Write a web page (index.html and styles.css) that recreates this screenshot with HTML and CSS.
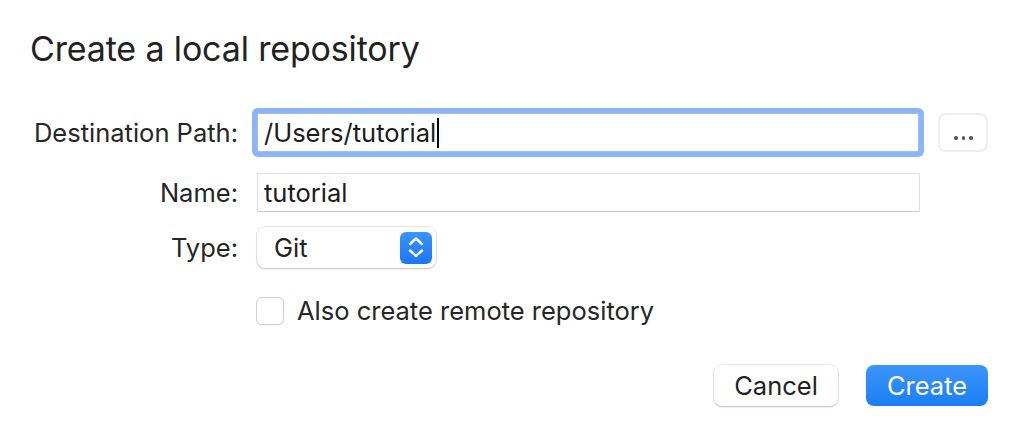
FILE: index.html
```html
<!DOCTYPE html>
<html>
<head>
<meta charset="utf-8">
<link rel="stylesheet" href="styles.css">
</head>
<body>
<div class="dialog">
  <h1 class="title">Create a local repository</h1>
  <div class="form">
    <div class="row row-path">
      <label class="label">Destination Path:</label>
      <div class="field focused"><span class="value">/Users/tutorial</span><span class="caret"></span></div>
      <button class="browse"><span class="dot"></span><span class="dot"></span><span class="dot"></span></button>
    </div>
    <div class="row row-name">
      <label class="label">Name:</label>
      <div class="field plain"><span class="value">tutorial</span></div>
    </div>
    <div class="row row-type">
      <label class="label">Type:</label>
      <div class="select">
        <span class="value">Git</span>
        <span class="stepper">
          <svg width="32" height="32" viewBox="0 0 32 32"><path d="M10 12 L16 6.5 L22 12" fill="none" stroke="#fff" stroke-width="2.4" stroke-linecap="round" stroke-linejoin="round"/><path d="M10 18.5 L16 24 L22 18.5" fill="none" stroke="#fff" stroke-width="2.4" stroke-linecap="round" stroke-linejoin="round"/></svg>
        </span>
      </div>
    </div>
    <div class="row row-check">
      <span class="label"></span>
      <label class="check"><span class="box"></span><span class="check-text">Also create remote repository</span></label>
    </div>
  </div>
  <div class="actions">
    <button class="btn cancel">Cancel</button>
    <button class="btn primary">Create</button>
  </div>
</div>
</body>
</html>
```
FILE: styles.css
```css
html, body {
  margin: 0;
  padding: 0;
  background: #ffffff;
}
body {
  width: 1022px;
  height: 430px;
  overflow: hidden;
  font-family: Inter, "Noto Sans", "Liberation Sans", sans-serif;
  color: #262626;
}
.dialog {
  padding: 26px 34px 0 30px;
}
.title {
  margin: 0;
  font-weight: 400;
  font-size: 34px;
  line-height: 46px;
  color: #222;
  letter-spacing: -0.15px;
}
.form {
  margin-top: 41px;
  display: flex;
  flex-direction: column;
}
.row {
  display: flex;
  align-items: center;
  gap: 19px;
}
.label {
  width: 208px;
  flex: none;
  text-align: right;
  font-size: 25.5px;
  color: #262626;
  white-space: nowrap;
}
.field {
  width: 663px;
  height: 39px;
  box-sizing: border-box;
  display: flex;
  align-items: center;
  padding-left: 6px;
  font-size: 25.5px;
  color: #1c1c1c;
  background: #fff;
}
.field.focused {
  border: 1px solid #9ec1f5;
  box-shadow: 0 0 0 5px #8cb5f7;
  border-radius: 2px;
}
.field.plain {
  border: 1px solid #e2e2e2;
  border-bottom-color: #c9c9c9;
}
.caret {
  display: inline-block;
  width: 2px;
  height: 30px;
  background: #000;
  margin-left: 1px;
}
.browse {
  width: 50px;
  height: 39px;
  box-sizing: border-box;
  border: 2px solid #efefef;
  border-radius: 8px;
  background: #fff;
  display: flex;
  align-items: center;
  justify-content: center;
  gap: 4px;
  padding: 11px 0 0 1px;
}
.dot {
  width: 3.6px;
  height: 3.6px;
  border-radius: 50%;
  background: #555;
}
.row-name {
  margin-top: 21px;
}
.row-type {
  margin-top: 15px;
}
.select {
  width: 179px;
  height: 41px;
  box-sizing: border-box;
  border-radius: 8px;
  background: #fff;
  box-shadow: 0 0 0 1px rgba(0,0,0,0.08), 0 1px 2px rgba(0,0,0,0.18);
  display: flex;
  align-items: center;
  justify-content: space-between;
  padding: 0 4px 0 17px;
  font-size: 25.5px;
  color: #222;
}
.stepper {
  width: 32px;
  height: 32px;
  border-radius: 6px;
  background: linear-gradient(#3a95ff, #1877f5);
  display: flex;
}
.row-check {
  margin-top: 27px;
}
.check {
  display: flex;
  align-items: center;
  gap: 13px;
  font-size: 25.5px;
  color: #262626;
}
.box {
  width: 28px;
  height: 28px;
  box-sizing: border-box;
  border: 1px solid #cfcfcf;
  border-radius: 6px;
  background: #fff;
  box-shadow: 0 1px 1px rgba(0,0,0,0.05);
  margin-left: -1px;
}
.actions {
  margin-top: 39px;
  display: flex;
  justify-content: flex-end;
  gap: 28px;
}
.btn {
  height: 41px;
  box-sizing: border-box;
  border-radius: 8px;
  font-family: Inter, "Noto Sans", "Liberation Sans", sans-serif;
  font-size: 25.5px;
  border: none;
  padding: 0;
}
.cancel {
  width: 124px;
  background: #fff;
  color: #222;
  box-shadow: 0 0 0 1px rgba(0,0,0,0.07), 0 1px 2px rgba(0,0,0,0.2);
}
.primary {
  width: 122px;
  background: linear-gradient(#3c95fb, #1a7ef6);
  color: #fff;
}
```
